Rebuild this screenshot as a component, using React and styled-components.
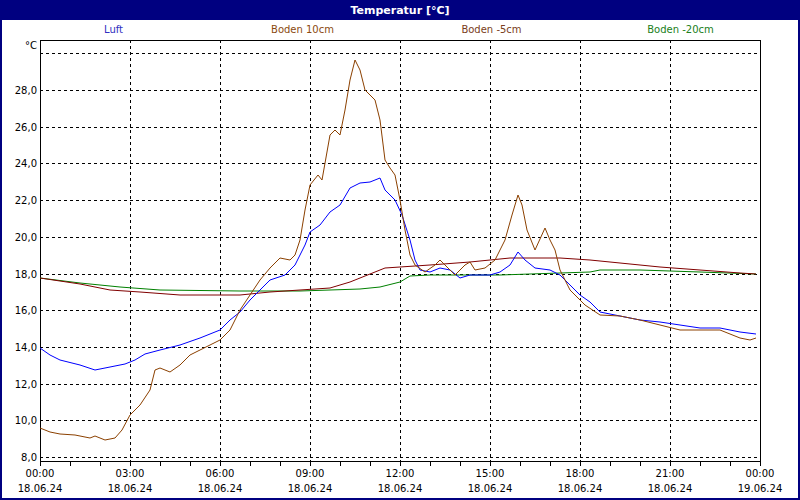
import React from "react";
import styled, { createGlobalStyle } from "styled-components";

const Global = createGlobalStyle`
  html, body { margin: 0; padding: 0; background: #fff; }
  body { font-family: Tahoma, "DejaVu Sans", "Liberation Sans", sans-serif; }
`;

const Frame = styled.div`
  width: 800px; height: 500px; box-sizing: border-box;
  border: 2px solid #000080; border-top: none;
  display: flex; flex-direction: column; background: #fff; overflow: hidden;
`;
const TitleBar = styled.div`
  flex: none; height: 20px; background: #000080; color: #fff; margin: 0 -2px;
  font: bold 11px "DejaVu Sans", "Liberation Sans", sans-serif;
  display: flex; align-items: center; justify-content: center;
`;
const Legend = styled.div`
  flex: none; height: 18px; display: grid; grid-template-columns: repeat(4, 189px);
  padding-left: 17px; align-items: center;
`;
const LegendItem = styled.span`
  text-align: center; color: ${p => p.$c};
  font: 10px "DejaVu Sans", "Liberation Sans", sans-serif;
`;
const Chart = styled.svg`
  flex: none; display: block; width: 796px; height: 460px;
`;

const brown = [[40,428],[50,432],[60,434],[75,435],[90,438],[95,436],[105,440],[115,438],[122,430],[130,415],[140,405],[150,390],[155,370],[160,368],[170,372],[180,365],[190,355],[200,350],[210,345],[220,340],[230,330],[240,310],[250,295],[260,280],[270,268],[280,258],[290,260],[295,255],[300,240],[305,210],[310,185],[318,175],[322,180],[330,135],[335,130],[340,135],[345,110],[350,80],[355,60],[360,70],[365,90],[375,100],[380,120],[385,160],[390,168],[395,175],[400,200],[405,230],[410,255],[415,265],[425,272],[435,265],[440,260],[445,265],[455,275],[465,265],[470,262],[475,270],[485,268],[495,260],[505,240],[512,215],[518,195],[522,205],[527,230],[535,250],[545,228],[550,240],[555,250],[560,270],[570,290],[585,305],[600,315],[620,316],[640,320],[660,325],[680,330],[700,330],[720,330],[740,338],[750,340],[756,338]];
const blue = [[40,348],[50,355],[60,360],[80,365],[95,370],[110,367],[125,364],[135,360],[145,354],[160,350],[180,345],[200,338],[220,330],[230,320],[240,312],[250,300],[260,290],[270,280],[285,275],[295,265],[305,245],[310,232],[320,225],[330,212],[340,205],[350,188],[360,183],[370,182],[380,178],[385,190],[395,200],[402,215],[410,240],[415,260],[420,270],[430,272],[440,268],[450,270],[460,278],[470,275],[490,275],[500,272],[510,265],[518,252],[525,260],[535,268],[550,270],[560,275],[570,285],[580,295],[590,302],[600,312],[620,316],[640,320],[660,322],[680,325],[700,328],[720,328],[740,332],[756,334]];
const red = [[40,278],[80,284],[110,290],[140,292],[180,295],[240,295],[270,292],[300,290],[330,288],[350,282],[370,274],[385,268],[400,267],[430,265],[470,262],[510,258],[560,258],[590,260],[620,263],[660,267],[700,270],[740,273],[756,274]];
const green = [[40,278],[80,283],[120,287],[160,290],[240,291],[300,291],[360,289],[380,287],[400,282],[410,276],[430,275],[500,275],[590,272],[600,270],[640,270],[700,272],[756,274]];

const yOf = t => 457 - (t - 8) * 18.35;
const yTicks = [8, 10, 12, 14, 16, 18, 20, 22, 24, 26, 28, 30];
const xHours = [0, 3, 6, 9, 12, 15, 18, 21, 24];
const pts = a => a.map(p => p.join(",")).join(" ");

export default function App() {
  return (
    <>
      <Global />
      <Frame>
        <TitleBar>Temperatur [°C]</TitleBar>
        <Legend>
          <LegendItem $c="#3030c0">Luft</LegendItem>
          <LegendItem $c="#8b4a10">Boden 10cm</LegendItem>
          <LegendItem $c="#7a4020">Boden -5cm</LegendItem>
          <LegendItem $c="#208020">Boden -20cm</LegendItem>
        </Legend>
        <Chart viewBox="2 38 796 460">
          <g stroke="#000" strokeDasharray="3 3" strokeWidth="1" shapeRendering="crispEdges">
            {yTicks.map(t => <line key={t} x1="40" x2="760" y1={Math.round(yOf(t)) + 0.5} y2={Math.round(yOf(t)) + 0.5} />)}
            {xHours.slice(1, -1).map(h => <line key={h} x1={40 + h * 30 + 0.5} x2={40 + h * 30 + 0.5} y1="40" y2="461" />)}
          </g>
          <g stroke="#000" strokeWidth="1" shapeRendering="crispEdges" fill="none">
            <rect x="40.5" y="40.5" width="720" height="420.5" />
            {Array.from({ length: 25 }, (_, i) => <line key={i} x1={40.5 + i * 30} x2={40.5 + i * 30} y1="461" y2="466" />)}
          </g>
          <g fill="#000" fontSize="10" fontFamily="DejaVu Sans, Liberation Sans, sans-serif" textAnchor="end">
            <text x="37" y="49">°C</text>
            {yTicks.slice(0, -1).map(t => <text key={t} x="37" y={yOf(t) + 4}>{t.toFixed(1).replace(".", ",")}</text>)}
          </g>
          <g fill="#000" fontSize="10" fontFamily="DejaVu Sans, Liberation Sans, sans-serif" textAnchor="middle">
            {xHours.map(h => (
              <g key={h}>
                <text x={40 + h * 30} y="477">{String(h % 24).padStart(2, "0")}:00</text>
                <text x={40 + h * 30} y="492">{h === 24 ? "19.06.24" : "18.06.24"}</text>
              </g>
            ))}
          </g>
          <g fill="none" strokeWidth="1">
            <polyline points={pts(green)} stroke="#008000" />
            <polyline points={pts(red)} stroke="#800000" />
            <polyline points={pts(blue)} stroke="#0000ff" />
            <polyline points={pts(brown)} stroke="#8b4000" />
          </g>
        </Chart>
      </Frame>
    </>
  );
}
